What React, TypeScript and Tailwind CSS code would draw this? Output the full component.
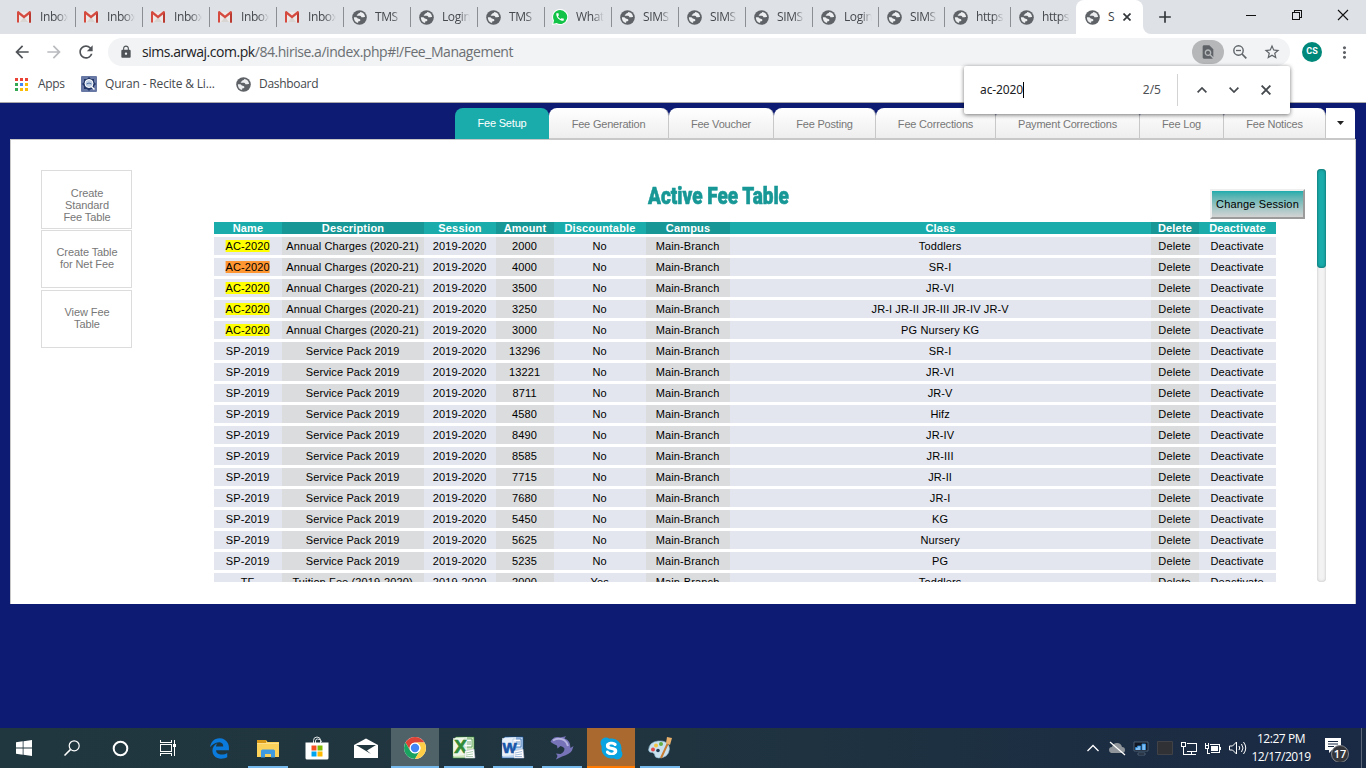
import React from "react";
import {
  MdArrowBack, MdArrowForward, MdRefresh, MdLock, MdFindInPage,
  MdStarBorder, MdMoreVert, MdKeyboardArrowUp, MdKeyboardArrowDown, MdClose, MdAdd, MdCall,
} from "react-icons/md";
import { FaSkype } from "react-icons/fa";
import { FaEdgeLegacy } from "react-icons/fa6";

const uiFont = "font-['Open_Sans','Noto_Sans',sans-serif]";
const pageFont = "font-['Liberation_Sans',Arial,sans-serif]";

type IconName = "gmail" | "globe" | "whatsapp";

const browserTabs: { icon: IconName; label: string; w: string }[] = [
  { icon: "gmail", label: "Inbox", w: "w-[67px]" },
  { icon: "gmail", label: "Inbox", w: "w-[67px]" },
  { icon: "gmail", label: "Inbox", w: "w-[67px]" },
  { icon: "gmail", label: "Inbox", w: "w-[67px]" },
  { icon: "gmail", label: "Inbox", w: "w-[67px]" },
  { icon: "globe", label: "TMS", w: "w-[67px]" },
  { icon: "globe", label: "Login", w: "w-[67px]" },
  { icon: "globe", label: "TMS", w: "w-[67px]" },
  { icon: "whatsapp", label: "WhatsApp", w: "w-[67px]" },
  { icon: "globe", label: "SIMS", w: "w-[67px]" },
  { icon: "globe", label: "SIMS", w: "w-[67px]" },
  { icon: "globe", label: "SIMS", w: "w-[67px]" },
  { icon: "globe", label: "Login", w: "w-[66px]" },
  { icon: "globe", label: "SIMS", w: "w-[66px]" },
  { icon: "globe", label: "https", w: "w-[66px]" },
  { icon: "globe", label: "https", w: "w-[65px]" },
];

function Gmail() {
  return (
    <svg width="14" height="12" viewBox="0 0 14 12">
      <path d="M1 1h12v10H1z" fill="#ece9e8" />
      <path d="M3 11l4-5 4 5z" fill="#d9d5d3" />
      <path d="M0 1.5C0 .6.6 0 1.4 0L7 4.4 12.600 0c.8 0 1.400.6 1.400 1.500V11.500h-2V3.400L7 7.400 2 3.400V11.500H0z" fill="#d54b3f" />
      <path d="M12 3.400l2-2V11.500h-2z" fill="#b93a30" />
    </svg>
  );
}

function Globe() {
  return (
    <svg width="15" height="15" viewBox="0 0 15 15" className="shrink-0">
      <circle cx="7.500" cy="7.500" r="7.300" fill="#5f6368" />
      <path
        d="M8.200 1.900c-.2 1-.9 1.300-1.800 1.500-.7.200-.5 1.100-1.300 1.300-.6.200-.5.900.1 1.100H8c.9.100 1.200.6 1.300 1.400h1.200c.8 0 1.300-.4 2.600-.3A5.700 5.700 0 0 0 8.200 1.900z"
        fill="#eceef0"
      />
      <path
        d="M1.900 7.200a5.700 5.700 0 0 0 4.200 5.800v-1.200c.2-.7 1.200-.5 1.900-.9.600-.4.400-1.100 0-1.600-.8-.8-1.900-.4-2.600-1.100-.5-.6-.8-1-1.600-1z"
        fill="#eceef0"
      />
    </svg>
  );
}

function WhatsApp() {
  return (
    <span className="grid h-4 w-4 place-items-center">
      <svg width="16" height="16" viewBox="0 0 16 16" className="col-start-1 row-start-1">
        <path d="M8 0a8 8 0 0 0-7 11.700L0 16l4.400-1A8 8 0 1 0 8 0z" fill="#fff" />
        <path d="M8 1a7 7 0 0 0-6 10.500L1.300 14.800 4.600 14A7 7 0 1 0 8 1z" fill="#12c347" />
      </svg>
      <MdCall size={10} color="#fff" className="col-start-1 row-start-1" />
    </span>
  );
}

function TabIcon({ name }: { name: IconName }) {
  if (name === "gmail") return <Gmail />;
  if (name === "whatsapp") return <WhatsApp />;
  return <Globe />;
}

function TabStrip() {
  return (
    <div className="flex h-[34px] bg-[#dee1e6] pl-[9px] text-[12px] text-[#45494d]">
      {browserTabs.map((t, i) => (
        <div key={i} className={`flex h-[34px] shrink-0 items-center ${t.w}`}>
          <span className="ml-1.5 flex w-[18px] shrink-0 justify-center">
            <TabIcon name={t.icon} />
          </span>
          <span className="ml-[7px] w-[28px] overflow-hidden whitespace-nowrap leading-5 tracking-[-0.4px] [mask-image:linear-gradient(to_right,black_60%,transparent_100%)]">
            {t.label}
          </span>
          {i < 15 && <span className="ml-auto h-5 w-px bg-[#8b8f94]" />}
        </div>
      ))}
      <span className="h-[34px] w-2 bg-white">
        <span className="block h-full w-full rounded-br-lg bg-[#dee1e6]" />
      </span>
      <div className="-ml-2 flex h-[34px] w-[67px] shrink-0 items-center rounded-t-lg bg-white">
        <span className="ml-2 flex w-[17px] shrink-0 justify-center">
          <TabIcon name="globe" />
        </span>
        <span className="ml-[7px] w-[15px] text-[#3c4043]">S</span>
        <svg width="8" height="8" viewBox="0 0 8 8"><path d="M.5.500l7 7M7.500.500l-7 7" stroke="#33373a" strokeWidth="1.700" /></svg>
      </div>
      <span className="h-[34px] w-2 bg-white">
        <span className="block h-full w-full rounded-bl-lg bg-[#dee1e6]" />
      </span>
      <span className="ml-1 flex w-[20px] items-center justify-center">
        <MdAdd size={20} color="#33373a" />
      </span>
      <div className="ml-auto flex h-[29px] items-center text-black">
        <svg width="128" height="14" viewBox="0 0 128 14" fill="none" stroke="#111" shapeRendering="crispEdges">
          <path d="M8 7.500h10" />
          <path d="M54.500 4.500h7v7h-7zM56.500 4.500v-2h7v7h-2" />
          <path d="M100 2l10 10M110 2l-10 10" shapeRendering="auto" strokeWidth="1.100" />
        </svg>
      </div>
    </div>
  );
}

function Toolbar() {
  return (
    <div className="flex h-9 items-center pl-3 text-[#5f6368]">
      <MdArrowBack size={20} color="#505458" />
      <MdArrowForward size={20} color="#b9bbbe" className="ml-3" />
      <MdRefresh size={20} color="#505458" className="ml-3" />
      <div className="ml-3 flex h-7 w-[1182px] shrink-0 items-center rounded-full bg-[#f1f3f4] pl-[11px] text-[14px]">
        <MdLock size={14} color="#505458" />
        <span className="ml-[9px] whitespace-nowrap pb-px tracking-[-0.46px] text-[#6b6f73]">
          <span className="text-[#202124]">sims.arwaj.com.pk</span>/84.hirise.a/index.php#!/Fee_Management
        </span>
        <span className="ml-auto flex h-6 w-8 items-center justify-center rounded-full bg-[#b5b7b8]">
          <MdFindInPage size={16} />
        </span>
        <svg width="14" height="14" viewBox="0 0 14 14" fill="none" stroke="#5f6368" className="ml-[9px] shrink-0">
          <circle cx="5.500" cy="5.500" r="4.700" strokeWidth="1.400" />
          <path d="M3 5.500h5" strokeWidth="1.300" />
          <path d="M9 9l4.300 4.300" strokeWidth="1.700" />
        </svg>
        <MdStarBorder size={18} className="ml-4 mr-[9px]" />
      </div>
      <span className="ml-3 flex h-5 w-5 shrink-0 items-center justify-center rounded-full bg-[#00897b] font-['Roboto'] text-[9px] font-bold text-white">
        CS
      </span>
      <MdMoreVert size={19} className="ml-[13px] shrink-0" />
    </div>
  );
}

const appDots = ["#ea4335", "#ea4335", "#ea4335", "#34a853", "#4285f4", "#fbbc05", "#34a853", "#fbbc05", "#fbbc05"];

function Bookmarks() {
  return (
    <div className="flex h-[33px] items-center border-b border-[#a9a9a9] pb-1 pl-[15px] text-[12px] text-[#45494d]">
      <svg width="13" height="13" viewBox="0 0 13 13">
        {appDots.map((c, i) => (
          <rect key={i} x={(i % 3) * 5} y={Math.floor(i / 3) * 5} width="3" height="3" fill={c} />
        ))}
      </svg>
      <span className="ml-[10px] w-[28px] tracking-[-0.3px]">Apps</span>
      <svg width="16" height="16" viewBox="0 0 16 16" className="ml-[15px]">
        <rect width="16" height="16" rx="1" fill="#6878a5" />
        <path d="M8 1l2 2h3v3l2 2-2 2v3h-3l-2 2-2-2H3v-3L1 8l2-2V3h3z" fill="#223767" />
        <circle cx="8" cy="7.500" r="4" fill="#bfd0e5" stroke="#fff" />
        <path d="M10.500 10.500l3 3" stroke="#fff" strokeWidth="1.500" />
        <path d="M5.500 8q2.500-2 5 0" stroke="#506f9f" fill="none" />
      </svg>
      <span className="ml-2 w-[131px] whitespace-nowrap tracking-[-0.17px]">Quran - Recite &amp; Li...</span>
      <Globe />
      <span className="ml-2 tracking-[-0.3px]">Dashboard</span>
    </div>
  );
}

function FindBar() {
  return (
    <div className="absolute left-[964px] top-[66px] z-10 flex h-12 w-[326px] items-center rounded-[2px] bg-white text-[12px] text-[#202124] shadow-[0_1px_4px_rgba(0,0,0,0.55)]">
      <span className="ml-4 tracking-[-0.1px]">ac-2020</span>
      <span className="h-4 w-px bg-black" />
      <span className="ml-auto mr-4 text-[#4d5155]">2/5</span>
      <span className="h-8 w-px bg-[#d3d3d3]" />
      <svg width="10" height="6" viewBox="0 0 10 6" fill="none" className="ml-[19px]"><path d="M.6 5.400L5 1l4.400 4.400" stroke="#45494d" strokeWidth="1.700" /></svg>
      <svg width="10" height="6" viewBox="0 0 10 6" fill="none" className="ml-[22px]"><path d="M.6.600L5 5 9.400.600" stroke="#45494d" strokeWidth="1.700" /></svg>
      <svg width="10" height="10" viewBox="0 0 10 10" className="ml-[22px] mr-[19px]"><path d="M.6.600l8.800 8.800M9.400.600L.6 9.400" stroke="#45494d" strokeWidth="1.900" /></svg>
    </div>
  );
}

const pageTabs = [
  { label: "Fee Generation", w: "w-[120px]" },
  { label: "Fee Voucher", w: "w-[105px]" },
  { label: "Fee Posting", w: "w-[102px]" },
  { label: "Fee Corrections", w: "w-[120px]" },
  { label: "Payment Corrections", w: "w-[144px]" },
  { label: "Fee Log", w: "w-[84px]" },
  { label: "Fee Notices", w: "w-[102px]" },
];

function PageTabs() {
  return (
    <div className="flex h-9 pl-[455px] pt-[5px] text-[11px] tracking-[-0.2px] text-[#777]">
      <div className="flex h-[31px] w-[94px] items-center justify-center rounded-t-lg bg-[#19acab] text-white">Fee Setup</div>
      {pageTabs.map((t) => (
        <div
          key={t.label}
          className={`flex h-[31px] items-center justify-center rounded-t-lg border-b border-r border-[#c8c8c8] bg-linear-to-b from-white to-[#eeeeee] pt-0.5 ${t.w}`}
        >
          {t.label}
        </div>
      ))}
      <div className="flex h-[31px] w-[29px] items-center justify-center rounded-tr-sm border-b border-[#c8c8c8] bg-white pb-px">
        <svg width="7" height="4" viewBox="0 0 7 4"><path d="M0 0h7L3.500 4z" fill="#222" /></svg>
      </div>
    </div>
  );
}

const columns = [
  { label: "Name", w: "w-[68px]" },
  { label: "Description", w: "w-[142px]" },
  { label: "Session", w: "w-[72px]" },
  { label: "Amount", w: "w-[58px]" },
  { label: "Discountable", w: "w-[92px]" },
  { label: "Campus", w: "w-[84px]" },
  { label: "Class", w: "w-[421px]" },
  { label: "Delete", w: "w-[48px]" },
  { label: "Deactivate", w: "w-[77px]" },
];

const ac = (amount: string, cls: string) => ["AC-2020", "Annual Charges (2020-21)", "2019-2020", amount, "No", "Main-Branch", cls, "Delete", "Deactivate"];
const sp = (amount: string, cls: string) => ["SP-2019", "Service Pack 2019", "2019-2020", amount, "No", "Main-Branch", cls, "Delete", "Deactivate"];

const rows = [
  ac("2000", "Toddlers"),
  ac("4000", "SR-I"),
  ac("3500", "JR-VI"),
  ac("3250", "JR-I JR-II JR-III JR-IV JR-V"),
  ac("3000", "PG Nursery KG"),
  sp("13296", "SR-I"),
  sp("13221", "JR-VI"),
  sp("8711", "JR-V"),
  sp("4580", "Hifz"),
  sp("8490", "JR-IV"),
  sp("8585", "JR-III"),
  sp("7715", "JR-II"),
  sp("7680", "JR-I"),
  sp("5450", "KG"),
  sp("5625", "Nursery"),
  sp("5235", "PG"),
  ["TF", "Tuition Fee (2019-2020)", "2019-2020", "2000", "Yes", "Main-Branch", "Toddlers", "Delete", "Deactivate"],
];

function highlight(row: number, col: number) {
  if (col !== 0 || row > 4) return "";
  return row === 1 ? "bg-[#ff9632]" : "bg-[#ffff00]";
}

function FeeTable() {
  return (
    <div className="h-[360px] w-[1062px] overflow-hidden text-[11px] tracking-[0.12px] text-black">
      <div className="mb-[3px] flex h-3 font-bold leading-3 tracking-[0.17px] text-white">
        {columns.map((c, i) => (
          <div key={c.label} className={`text-center ${c.w} ${i % 2 ? "bg-[#179896]" : "bg-[#19acab]"}`}>{c.label}</div>
        ))}
      </div>
      {rows.map((r, ri) => (
        <div key={ri} className="mb-[3px] flex h-[18px]">
          {r.map((v, ci) => (
            <div
              key={ci}
              className={`flex items-center justify-center whitespace-nowrap ${columns[ci].w} ${ci % 2 ? "bg-[#dbdcdd]" : "bg-[#e3e6ee]"}`}
            >
              <span className={`-translate-x-[0.4px] leading-3 ${highlight(ri, ci)}`}>{v}</span>
            </div>
          ))}
        </div>
      ))}
    </div>
  );
}

function Panel() {
  const side = "flex w-[91px] justify-center border border-[#dcdcdc] pl-px text-center leading-3";
  return (
    <div className={`ml-[10px] flex h-[465px] w-[1346px] border border-b-0 border-[#c8c8c8] bg-white ${pageFont}`}>
      <nav className="ml-[30px] mt-[30px] flex w-[91px] flex-col text-[11px] tracking-[-0.1px] text-[#777]">
        <div className={`${side} h-[59px] pt-4`}>Create<br />Standard<br />Fee Table</div>
        <div className={`${side} mt-px h-[58px] pt-[15px]`}>Create Table<br />for Net Fee</div>
        <div className={`${side} mt-0.5 h-[58px] pt-[15px]`}>View Fee<br />Table</div>
      </nav>
      <main className="ml-[82px] flex w-[1092px] flex-col">
        <div className="flex h-[82px]">
          <div className="ml-[434px] mt-[42px] w-[143px]">
            <h1 className="w-max origin-left scale-x-[0.79] whitespace-nowrap font-['Roboto'] text-[24px] font-black leading-7 text-[#179896] [-webkit-text-stroke:0.6px_#179896]">
              Active Fee Table
            </h1>
          </div>
          <button className="ml-[419px] mt-[49px] h-[30px] w-[95px] shrink-0 whitespace-nowrap border-2 border-b-[#9b9b9b] border-l-[#efefef] border-r-[#9b9b9b] border-t-[#efefef] bg-linear-to-b from-[#19acab] to-[#d3d3d3] text-[11px] tracking-[0.15px] text-black">
            Change Session
          </button>
        </div>
        <FeeTable />
      </main>
      <div className="ml-[11px] mt-[29px] h-[413px] w-[9px] rounded bg-[#f3f3f3] shadow-[inset_0_0_3px_#bbb]">
        <div className="h-[99px] rounded bg-[#19acab] shadow-[inset_0_0_3px_#0a5554]" />
      </div>
    </div>
  );
}

function Slot({ children, tone = "", bar = "" }: { children: React.ReactNode; tone?: string; bar?: string }) {
  return (
    <div className={`mr-px flex h-10 w-12 shrink-0 flex-col items-center ${tone}`}>
      <div className="flex h-[38px] items-center justify-center pt-0.5">{children}</div>
      <div className={`h-0.5 ${bar}`} />
    </div>
  );
}

function OfficeIcon({ letter, color, light }: { letter: string; color: string; light: string }) {
  return (
    <svg width="24" height="24" viewBox="0 0 24 24">
      <path d="M4 1h18v21H1V4z" fill={light} stroke={color} strokeOpacity=".6" />
      <path d="M12 3h8v8h-8z" fill="#fff" stroke={color} strokeWidth=".7" />
      <path d="M13 6h6M13 8h6" stroke={color} strokeWidth=".7" />
      <path d="M1 2l14-1v18L1 20z" fill="#fff" fillOpacity=".65" />
      <text x="8.500" y="17" textAnchor="middle" fontFamily="Liberation Sans" fontWeight="700" fontSize={letter === "W" ? 15 : 19} stroke={color} strokeWidth=".7" fill={color}>{letter}</text>
      <path d="M13 15l9-2 1 9H13z" fill="#fff" stroke="#bbc" strokeWidth=".5" />
      <path d="M14 17l7-1.500M14 19l7-1M14 20.500h7" stroke={color} strokeOpacity=".5" strokeWidth=".8" />
    </svg>
  );
}

const blueBar = "w-10 bg-[#76b9ed]";

function Taskbar() {
  return (
    <div className={`flex h-10 bg-linear-to-r from-[#21373f] via-[#1f343f] to-[#1a2944] text-white ${uiFont}`}>
      <div className="mr-[3px] flex w-48 items-center">
        <div className="flex w-12 justify-center">
          <svg width="16" height="16" viewBox="0 0 16 16" fill="#fff"><path d="M0 2.300L6.700 1.300V7.500H0zM7.500 1.200L16 0v7.500H7.500zM0 8.400h6.700v6.300L0 13.700zM7.500 8.400H16V16l-8.500-1.200z" /></svg>
        </div>
        <div className="flex w-12 justify-center">
          <svg width="16" height="16" viewBox="0 0 16 16" fill="none" stroke="#fff" strokeWidth="1.200"><circle cx="10.200" cy="5.800" r="5" /><path d="M6.600 9.400L.5 15.500" strokeWidth="1.500" /></svg>
        </div>
        <div className="flex w-12 justify-center">
          <svg width="17" height="17" viewBox="0 0 17 17" fill="none" stroke="#fff" strokeWidth="2"><circle cx="8.500" cy="8.500" r="6.800" /></svg>
        </div>
        <div className="flex w-12 justify-center">
          <svg width="17" height="16" viewBox="0 0 17 16" fill="none" stroke="#fff" shapeRendering="crispEdges"><path d="M.5 0v2.500h11V0M.5 4.500h11v7H.5zM.5 16v-2.500h11V16M14.500 0v4M14.500 7v9" /><path d="M13 4h3v3h-3z" fill="#fff" stroke="none" /></svg>
        </div>
      </div>
      <Slot><FaEdgeLegacy size={21} color="#0a7bdc" /></Slot>
      <Slot bar={blueBar}>
        <svg width="22" height="19" viewBox="0 0 22 19"><path d="M0 1h9l1.500 2H22v15H0z" fill="#fdd25b" /><path d="M0 1h9v3H0z" fill="#d99a19" /><path d="M0 4h22v1H0z" fill="#ffe08a" /><path d="M4 18.500V12q0-1.500 1.500-1.500h11q1.500 0 1.500 1.500v6.500h-4V15H8v3.500z" fill="#3f9ae0" /></svg>
      </Slot>
      <Slot>
        <svg width="24" height="24" viewBox="0 0 24 24"><path d="M8.500 7V4.500Q8.500 1 12 1q3.500 0 3.500 3.500V7M10.500 7V5q0-2 2-2 4 0 4 3" fill="none" stroke="#dfe5e7" /><path d="M.5 6.500h23V22q0 1.500-1.500 1.500H2Q.5 23.500.5 22z" fill="#fff" /><path fill="#f25022" d="M6.500 9.500h5v5h-5z" /><path fill="#7fba00" d="M12.500 9.500h5v5h-5z" /><path fill="#00a4ef" d="M6.500 15.500h5v5h-5z" /><path fill="#ffb900" d="M12.500 15.500h5v5h-5z" /></svg>
      </Slot>
      <Slot>
        <svg width="24" height="20" viewBox="0 0 24 20"><path d="M0 7L12 .5 24 7v13H0z" fill="#fff" /><path d="M2 7h20l-9 5.500 4 3.500z" fill="#21373f" /></svg>
      </Slot>
      <Slot tone="bg-[#4e6268]" bar="w-12 bg-[#76b9ed]">
        <svg width="22" height="22" viewBox="0 0 22 22"><circle cx="11" cy="11" r="11" fill="#fff" /><path d="M1.500 5.500A11 11 0 0 1 20.500 5.500H11a5.500 5.500 0 0 0-4.800 8z" fill="#dc4437" /><path d="M1.500 5.500A11 11 0 0 0 11 22l4.800-8.200a5.500 5.500 0 0 1-9.600 0z" fill="#1aa260" /><path d="M20.500 5.500A11 11 0 0 1 11 22l4.800-8.200A5.500 5.500 0 0 0 11 5.500z" fill="#ffcd46" /><circle cx="11" cy="11" r="5.300" fill="#fff" /><circle cx="11" cy="11" r="4.200" fill="#4285f4" /></svg>
      </Slot>
      <Slot bar={blueBar}><OfficeIcon letter="X" color="#328b37" light="#cfe6bd" /></Slot>
      <Slot bar={blueBar}><OfficeIcon letter="W" color="#1856a8" light="#bcd5ef" /></Slot>
      <Slot bar={blueBar}>
        <svg width="24" height="24" viewBox="0 0 24 24"><path d="M2 3.500Q5 0 10 1.500L16 .2l-1.500 2.300Q20.500 4 20.500 12l3-2-1.500 4.500Q20 18 12 20.500l-6 3 1.500-3.500L6 17.500l4.500.5q4-2 4-5.500-1-2-4-2.500l-3 2.500-.5-3Q4 8 2 7L.5 5.500z" fill="#7773b9" /><path d="M3 4.500Q8 1.500 14 4q3 2 4 6" fill="none" stroke="#b5b3df" strokeWidth="2" /></svg>
      </Slot>
      <Slot tone="bg-[#a9692f]" bar="w-12 bg-[#ff7a00]">
        <span className="grid place-items-center">
          <span className="col-start-1 row-start-1 h-4 w-4 rounded-full bg-white" />
          <FaSkype size={25} color="#08a3e0" className="col-start-1 row-start-1" />
        </span>
      </Slot>
      <Slot bar={blueBar}>
        <svg width="24" height="24" viewBox="0 0 24 24"><path d="M10 5Q1 6 .5 14q.5 3 4 2.500l2 1.500q0 4 4 4 10 0 11-9Q21 4 10 5z" fill="#c9e1ef" stroke="#89b5cf" strokeWidth=".6" /><circle cx="5" cy="13.500" r="2" fill="#e34949" /><circle cx="8" cy="9.500" r="2" fill="#f3c443" /><circle cx="13" cy="8" r="2" fill="#63ad42" /><circle cx="10" cy="14.500" r="1.800" fill="#1f3a55" /><path d="M13 22L20 7" stroke="#c77c31" strokeWidth="2" /><path d="M18 7l1-6 5 1-2 7z" fill="#e8b06b" /></svg>
      </Slot>
      <div className="ml-auto flex items-center">
        <svg width="168" height="20" viewBox="0 0 168 20" fill="none" stroke="#fff">
          <path d="M6.500 13L12 7.500l5.500 5.500" strokeWidth="1.300" />
          <path d="M30 15q-2-1-2-3 0-3 3-3 1-4 5-4 4 0 5 4 3 0 3 3 0 3-3 3z" fill="#8e9499" stroke="none" /><path d="M29 4l15 13" strokeWidth="1.200" />
          <path d="M53 4h14v9H53zM57 15h7v2h-7z" fill="#101722" stroke="#566a80" strokeWidth=".8" /><path d="M54.500 12V9.500h2V8h3v4M61 12V6h3.500v6" fill="#7fbdf0" stroke="#2f8bd9" strokeWidth=".8" />
          <path d="M76.500 3.500h15v13h-15z" fill="#2f3135" stroke="#414247" />
          <path d="M105.500 5.500h10v8h-10M110.500 13.500v3M107 16.500h8M100.500 4.500h4v4h-4zM102.500 8.500v8h4" shapeRendering="crispEdges" />
          <path d="M124.500 7.500v3h3v-3zM124.500 7.500V5M127.500 7.500V5M126 11v4h3M128.500 6.500h10v8h-9M139.500 9v3" shapeRendering="crispEdges" /><path d="M130 8h7v5h-7z" fill="#fff" stroke="none" />
          <path d="M148.500 8h3l4-4v12l-4-4h-3zM158 8q1.500 2 0 4M160.500 6q3 4 0 8M162.500 4q4.500 6 0 12" />
        </svg>
        <div className="flex w-[64px] flex-col items-center whitespace-nowrap text-[12px] leading-[18px] tracking-[-0.45px]">
          <span>12:27 PM</span>
          <span>12/17/2019</span>
        </div>
        <svg width="30" height="28" viewBox="0 0 30 28" className="ml-[11px]">
          <path d="M1 4h16v12H8l-3 3v-3H1z" fill="#fff" /><path d="M4 7.500h10M4 10h10M4 12.500h6" stroke="#1a2944" />
          <circle cx="16" cy="20" r="8.500" fill="#34363b" stroke="#85888d" />
          <text x="16" y="24" textAnchor="middle" fontSize="11" fontFamily="Open Sans" fontWeight="600" fill="#fff">17</text>
        </svg>
        <div className="ml-[7px] mr-1 h-10 w-px bg-[#5c6779]" />
      </div>
    </div>
  );
}

export default function App() {
  return (
    <div className="relative flex h-[768px] w-[1366px] flex-col overflow-hidden bg-[#0d1c72]">
      <header className={`bg-white ${uiFont}`}>
        <TabStrip />
        <Toolbar />
        <Bookmarks />
      </header>
      <FindBar />
      <div className={`${pageFont} flex-1`}>
        <PageTabs />
        <Panel />
      </div>
      <Taskbar />
    </div>
  );
}
